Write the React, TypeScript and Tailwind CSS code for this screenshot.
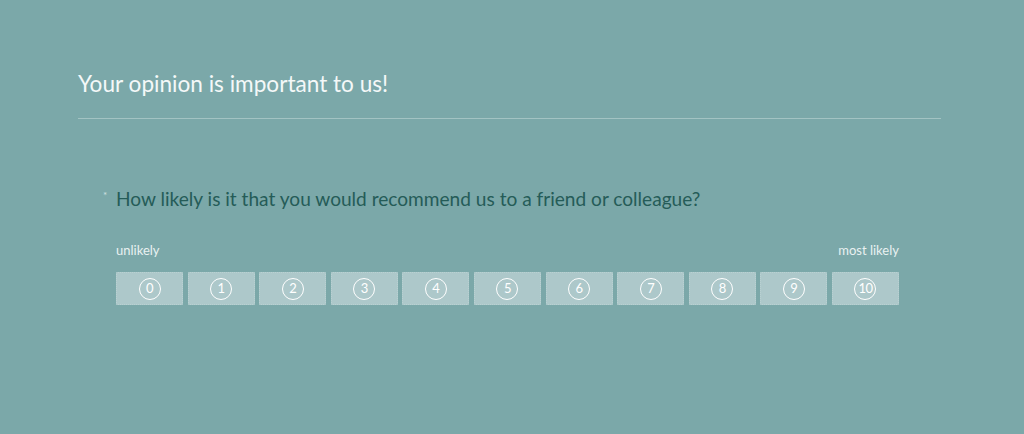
import React from "react";

const scores = [0, 1, 2, 3, 4, 5, 6, 7, 8, 9, 10];

const App: React.FC = () => {
  return (
    <div
      className="w-[1024px] h-[434px] bg-[#7ba8a9] overflow-hidden"
      style={{ fontFamily: "Lato, 'Open Sans', sans-serif" }}
    >
      <div className="pl-[78px] pr-[83px] pt-[70px]">
        <h1 className="text-[22.6px] leading-[27px] text-[#f4f8f8] font-normal">
          Your opinion is important to us!
        </h1>
        <div className="mt-[21px] h-px bg-[#a3c3c3]" />

        <div className="pl-[38px] pt-[68px]">
          <div className="relative">
            <span className="absolute -left-[13px] top-[1px] text-[10px] text-[#cfe0e0]">*</span>
            <h2 className="text-[19.1px] leading-[24px] text-[#255c58] font-normal">
              How likely is it that you would recommend us to a friend or colleague?
            </h2>
          </div>

          <div className="w-[783px] mt-[31px] flex justify-between text-[13px] leading-[16px] text-[#e9f1f1]">
            <span>unlikely</span>
            <span>most likely</span>
          </div>

          <div className="w-[783px] mt-[14px] flex justify-between">
            {scores.map((n) => (
              <button
                key={n}
                className="w-[67px] h-[33px] bg-[#adc8ca] border border-dotted border-[#b9d1d2] rounded-[1px] flex items-center justify-center"
              >
                <span className="w-[22px] h-[22px] rounded-full border-[1.5px] border-white flex items-center justify-center text-[13px] leading-none text-white tracking-[-0.5px]">
                  {n}
                </span>
              </button>
            ))}
          </div>
        </div>
      </div>
    </div>
  );
};

export default App;
